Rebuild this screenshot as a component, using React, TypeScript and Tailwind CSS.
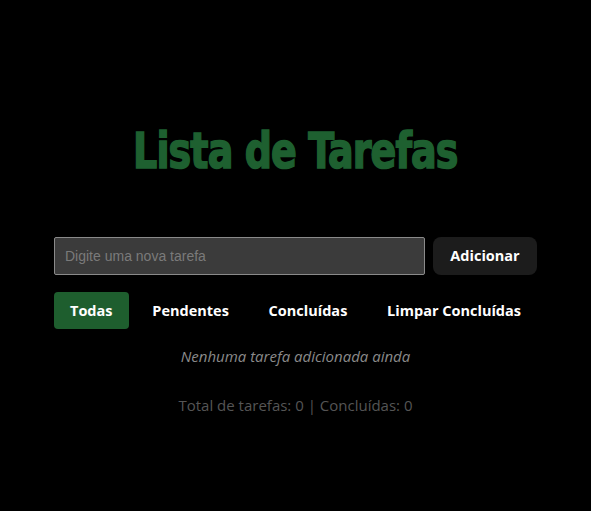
import { useState } from "react";

type Task = { id: number; text: string; done: boolean };

export default function App() {
  const [tasks] = useState<Task[]>([]);
  const [filter, setFilter] = useState("todas");
  const [text, setText] = useState("");

  const filters = [
    { value: "todas", label: "Todas" },
    { value: "pendentes", label: "Pendentes" },
    { value: "concluidas", label: "Concluídas" },
  ];

  const done = tasks.filter((t) => t.done).length;

  return (
    <div className="min-h-screen bg-black font-['Open_Sans','Noto_Sans',sans-serif]">
      <div className="mx-auto w-[483px] pt-[118px]">
        <div className="text-center">
          <h1 className="inline-block scale-x-[0.88] scale-y-[1.04] font-['Impact','DejaVu_Sans_Condensed',sans-serif] text-[48px] font-bold leading-[64px] tracking-[-1px] text-[#1e6030] [-webkit-text-stroke:1.5px_#1e6030]">
            Lista de Tarefas
          </h1>
        </div>

        <div className="mt-[55px] flex gap-2">
          <input
            value={text}
            onChange={(e) => setText(e.target.value)}
            placeholder="Digite uma nova tarefa"
            className="h-[38px] flex-1 rounded-[2px] border border-[#8a8a8a] bg-[#3b3b3b] px-[10px] font-['Liberation_Sans',sans-serif] text-[14px] text-white placeholder:text-[#7a7a7a] outline-none"
          />
          <button className="h-[38px] w-[104px] rounded-lg bg-[#1c1c1c] text-[14.5px] font-bold text-white">
            Adicionar
          </button>
        </div>

        <div className="mt-[17px] flex justify-between">
          {filters.map((f) => (
            <button
              key={f.value}
              onClick={() => setFilter(f.value)}
              className={
                filter === f.value
                  ? "h-[37px] whitespace-nowrap rounded bg-[#1e5e2e] px-4 text-[14.5px] font-bold text-white"
                  : "h-[37px] whitespace-nowrap rounded px-4 text-[14.5px] font-bold text-white"
              }
            >
              {f.label}
            </button>
          ))}
          <button className="h-[37px] whitespace-nowrap rounded px-4 text-[14.5px] font-bold text-white">
            Limpar Concluídas
          </button>
        </div>

        {tasks.length === 0 && (
          <p className="mt-[16px] text-center text-[15px] italic text-[#8a8a8a]">
            Nenhuma tarefa adicionada ainda
          </p>
        )}

        <p className="mt-[26px] text-center text-[15px] text-[#555555]">
          Total de tarefas: {tasks.length} | Concluídas: {done}
        </p>
      </div>
    </div>
  );
}
